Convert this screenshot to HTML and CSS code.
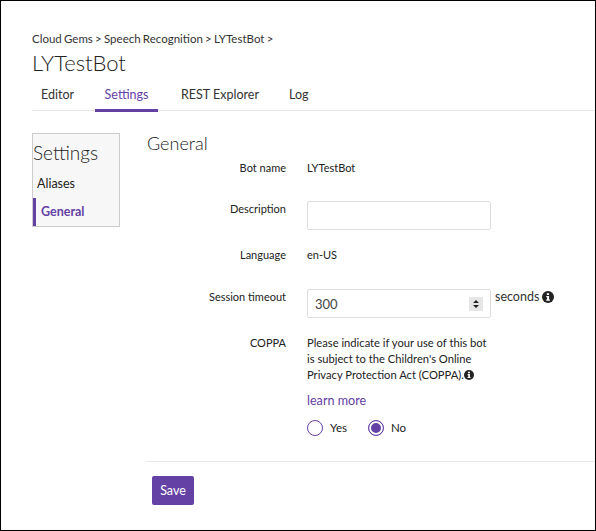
FILE: index.html
```html
<!DOCTYPE html>
<html lang="en">
<head>
  <meta charset="UTF-8" />
  <title>LYTestBot</title>
  <link rel="stylesheet" href="styles.css">
</head>

<body>
  <div class="page">
    <div class="breadcrumb">Cloud Gems &gt; Speech Recognition &gt; LYTestBot &gt;</div>
    <h1 class="title">LYTestBot</h1>

    <div class="tabs">
      <a class="tab tab-editor">Editor</a>
      <a class="tab tab-settings active">Settings</a>
      <a class="tab tab-rest">REST Explorer</a>
      <a class="tab tab-log">Log</a>
    </div>

    <div class="content">
      <div class="sidebar">
        <div class="sidebar-title">Settings</div>
        <a class="side-link">Aliases</a>
        <a class="side-link selected">General</a>
      </div>

      <div class="main">
        <h2 class="section-title">General</h2>

        <div class="row row-name">
          <label class="row-label">Bot name</label>
          <div class="row-value">LYTestBot</div>
        </div>
        <div class="row row-desc">
          <label class="row-label">Description</label>
          <div class="row-value"><div class="input"></div></div>
        </div>
        <div class="row row-lang">
          <label class="row-label">Language</label>
          <div class="row-value">en-US</div>
        </div>
        <div class="row row-timeout">
          <label class="row-label">Session timeout</label>
          <div class="row-value timeout">
            <div class="input number">
              <span>300</span>
              <span class="stepper">
                <svg width="14" height="14" viewBox="0 0 14 14">
                  <rect width="14" height="14" fill="#e6e6e6"/>
                  <path d="M7 3 10 6H4Z M7 11 4 8H10Z" fill="#222"/>
                </svg>
              </span>
            </div>
            <span class="suffix">seconds</span>
            <svg class="info" width="12" height="12" viewBox="0 0 12 12">
              <circle cx="6" cy="6" r="6" fill="#222"/>
              <path d="M4.8 2.2h2.3v1.7H4.8Z M4.3 4.9h2.8v3.5h.8v1.3H4.2V8.4h.9V6.2h-.8Z" fill="#fff"/>
            </svg>
          </div>
        </div>
        <div class="row row-coppa">
          <label class="row-label">COPPA</label>
          <div class="row-value">
            <p class="coppa-text">Please indicate if your use of this bot<br>is subject to the Children's Online<br>Privacy Protection Act (COPPA).
              <svg class="info-small" width="10" height="10" viewBox="0 0 12 12">
                <circle cx="6" cy="6" r="6" fill="#222"/>
                <path d="M4.8 2.2h2.3v1.7H4.8Z M4.3 4.9h2.8v3.5h.8v1.3H4.2V8.4h.9V6.2h-.8Z" fill="#fff"/>
              </svg>
            </p>
            <a class="learn-more">learn more</a>
            <div class="radios">
              <span class="radio"></span><span class="radio-label">Yes</span>
              <span class="radio checked"></span><span class="radio-label">No</span>
            </div>
          </div>
        </div>

        <div class="footer">
          <button class="save">Save</button>
        </div>
      </div>
    </div>
  </div>
</body>
</html>
```

FILE: styles.css
```css
* {
  box-sizing: border-box;
}
body {
  margin: 0;
  font-family: Lato, "Noto Sans", Arial, sans-serif;
  font-size: 11px;
  color: #222;
}
.page {
  width: 596px;
  height: 531px;
  border: 1px solid #000;
  padding: 30px 0 0 31px;
  overflow: hidden;
}
.breadcrumb {
  font-size: 11.5px;
  word-spacing: -0.7px;
  line-height: 16px;
  color: #333;
}
.title {
  margin: 2px 0 0;
  font-size: 22px;
  font-weight: 300;
  line-height: 28px;
  color: #222;
}
.tabs {
  display: flex;
  height: 32px;
  margin-top: 2px;
  border-bottom: 1px solid #e8e8e8;
  font-size: 12.5px;
  line-height: 28px;
}
.tab {
  height: 33px;
  padding-top: 2px;
  color: #333;
}
.tab-editor {
  margin-left: 9px;
  width: 54px;
}
.tab-settings {
  width: 63px;
  text-align: center;
  color: #6441a5;
  border-bottom: 3px solid #6441a5;
}
.tab-rest {
  margin-left: 23px;
  width: 108px;
}
.content {
  display: flex;
  margin-top: 22px;
}
.sidebar {
  width: 88px;
  height: 94px;
  background: #f7f7f7;
  border: 1px solid #ccc;
  flex-shrink: 0;
}
.sidebar-title {
  font-size: 19px;
  font-weight: 300;
  line-height: 24px;
  margin-top: 7px;
  color: #222;
}
.side-link {
  display: block;
  height: 28px;
  line-height: 28px;
  padding-left: 4px;
  margin-top: 5px;
  font-size: 12.5px;
}
.selected {
  margin-top: 0;
  padding-left: 5px;
  border-left: 3px solid #6441a5;
  color: #6441a5;
  font-weight: 700;
}
.main {
  width: 449px;
  margin-left: 27px;
}
.section-title {
  margin: 0;
  font-size: 18px;
  font-weight: 300;
  line-height: 20px;
  color: #222;
}
.row {
  display: flex;
}
.row-label {
  width: 139px;
  text-align: right;
  flex-shrink: 0;
  line-height: 16px;
}
.row-value {
  margin-left: 21px;
  line-height: 16px;
}
.row-name {
  margin-top: 7px;
}
.row-desc {
  margin-top: 25px;
}
.row-lang {
  margin-top: 17px;
}
.row-timeout {
  margin-top: 26px;
}
.row-coppa {
  margin-top: 16px;
}
.row-coppa .row-label {
  padding-top: 1px;
}
.input {
  width: 184px;
  height: 29px;
  background: #fff;
  border: 1px solid #ddd;
  border-radius: 2px;
}
.number {
  display: flex;
  align-items: center;
  justify-content: space-between;
  padding: 0 7px;
  font-size: 13px;
  color: #444;
}
.stepper {
  display: flex;
}
.timeout {
  display: flex;
  align-items: flex-start;
}
.suffix {
  margin-left: 4px;
  font-size: 12.5px;
  color: #333;
}
.info {
  margin: 2px 0 0 3px;
}
.coppa-text {
  width: 184px;
  margin: 1px 0 0;
  font-size: 11.2px;
}
.info-small {
  margin-left: -3px;
  vertical-align: -1px;
}
.learn-more {
  display: block;
  margin-top: 10px;
  font-size: 12.6px;
  color: #6441a5;
}
.radios {
  display: flex;
  align-items: center;
  margin-top: 11px;
}
.radio {
  width: 16px;
  height: 16px;
  border: 1px solid #6441a5;
  border-radius: 50%;
  background: #fff;
}
.checked {
  background: #6441a5;
  box-shadow: inset 0 0 0 2px #fff;
  margin-left: 21px;
}
.radio-label {
  margin-left: 7px;
  width: 17px;
  font-size: 11.5px;
}
.footer {
  margin: 25px 0 0 -1px;
  padding: 14px 0 0 6px;
  border-top: 1px solid #e8e8e8;
}
.save {
  display: block;
  width: 42px;
  height: 29px;
  padding: 0;
  background: #6441a5;
  color: #fff;
  border: none;
  border-radius: 2px;
  font-family: inherit;
  font-size: 12.5px;
}
```
